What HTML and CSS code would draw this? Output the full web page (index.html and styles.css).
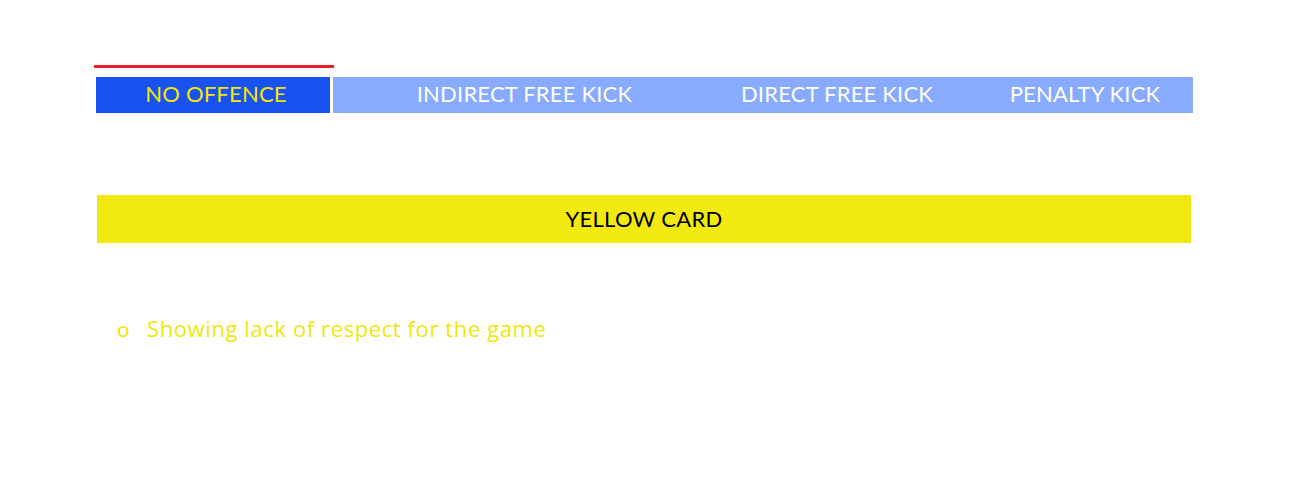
FILE: index.html
```html
<!DOCTYPE html>
<html>
<head>
<meta charset="utf-8">
<link rel="stylesheet" href="styles.css">
</head>
<body>
<div class="page">
  <nav class="tabs">
    <div class="tab-indicator"></div>
    <div class="tab-row">
      <div class="tab tab-active">NO OFFENCE</div>
      <div class="tab-rest">
        <div class="tab tab-indirect">INDIRECT FREE KICK</div>
        <div class="tab tab-direct">DIRECT FREE KICK</div>
        <div class="tab tab-penalty">PENALTY KICK</div>
      </div>
    </div>
  </nav>
  <div class="card-banner">YELLOW CARD</div>
  <ul class="offences">
    <li><span class="bullet">o</span><span class="offence-text">Showing lack of respect for the game</span></li>
  </ul>
</div>
</body>
</html>
```
FILE: styles.css
```css
html, body {
  margin: 0;
  padding: 0;
  background: #ffffff;
}
body {
  font-family: Lato, "Open Sans", sans-serif;
}
.page {
  padding: 65px 0 0 94px;
  width: 1100px;
}
.tabs {
  display: flex;
  flex-direction: column;
}
.tab-indicator {
  width: 240px;
  height: 3px;
  background: #ed1c24;
  margin-bottom: 9px;
}
.tab-row {
  display: flex;
  margin-left: 2px;
  height: 36px;
}
.tab {
  display: flex;
  align-items: center;
  justify-content: center;
  font-size: 22px;
  letter-spacing: 0.2px;
  color: #ffffff;
  height: 36px;
  padding-bottom: 3px;
  box-sizing: border-box;
}
.tab-active {
  width: 234px;
  background: #1852f0;
  color: #f5e800;
  margin-right: 3px;
  padding-left: 6px;
}
.tab-rest {
  display: flex;
  background: #88aaff;
  width: 860px;
}
.tab-indirect { width: 383px; }
.tab-direct { width: 242px; }
.tab-penalty { width: 235px; padding-left: 19px; }
.card-banner {
  margin: 82px 0 0 3px;
  width: 1094px;
  height: 48px;
  background: #f2ea0e;
  color: #000000;
  font-size: 22px;
  letter-spacing: 0.3px;
  display: flex;
  align-items: center;
  justify-content: center;
  padding-bottom: 1px;
  box-sizing: border-box;
}
.offences {
  list-style: none;
  margin: 72px 0 0 0;
  padding: 0 0 0 23px;
}
.offences li {
  display: flex;
  align-items: baseline;
  color: #f0e60c;
  font-size: 22px;
}
.bullet {
  width: 30px;
}
.offence-text {
  font-family: "Open Sans", Lato, sans-serif;
  font-size: 22px;
  line-height: 26px;
  letter-spacing: 0.6px;
}
```
